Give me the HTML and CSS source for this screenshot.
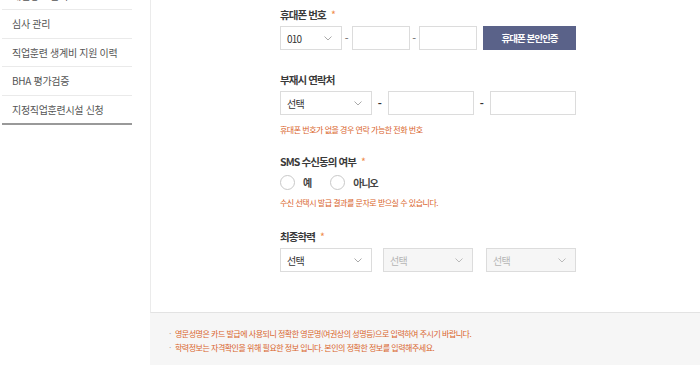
FILE: index.html
```html
<!DOCTYPE html>
<html lang="ko">
<head>
  <meta charset="UTF-8">
  <title>회원정보 수정</title>
  <link rel="stylesheet" href="styles.css">
</head>
<body>
  <aside class="sidebar">
    <ul class="side-menu">
      <li>개인정보 관리</li>
      <li>심사 관리</li>
      <li>직업훈련 생계비 지원 이력</li>
      <li>BHA 평가검증</li>
      <li>지정직업훈련시설 신청</li>
    </ul>
  </aside>

  <main class="content">
    <section class="form-box">
      <div class="form">
        <div class="field field-phone">
          <div class="label">휴대폰 번호 <span class="req">*</span></div>
          <div class="row">
            <div class="select sel-sm"><span>010</span><svg width="8" height="5" viewBox="0 0 8 5"><path d="M0.5 0.5 L4 4 L7.5 0.5" fill="none" stroke="#aaa"/></svg></div>
            <span class="dash">-</span>
            <div class="input inp-sm"></div>
            <span class="dash">-</span>
            <div class="input inp-sm"></div>
            <button class="btn">휴대폰 본인인증</button>
          </div>
        </div>

        <div class="field field-alt">
          <div class="label">부재시 연락처</div>
          <div class="row">
            <div class="select"><span>선택</span><svg width="8" height="5" viewBox="0 0 8 5"><path d="M0.5 0.5 L4 4 L7.5 0.5" fill="none" stroke="#aaa"/></svg></div>
            <span class="dash dash-b">-</span>
            <div class="input inp-md"></div>
            <span class="dash dash-b">-</span>
            <div class="input inp-md"></div>
          </div>
          <p class="help">휴대폰 번호가 없을 경우 연락 가능한 전화 번호</p>
        </div>

        <div class="field field-sms">
          <div class="label">SMS 수신동의 여부 <span class="req">*</span></div>
          <div class="radios">
            <label class="radio"><span class="circle"></span>예</label>
            <label class="radio"><span class="circle"></span>아니오</label>
          </div>
          <p class="help help-sms">수신 선택시 발급 결과를 문자로 받으실 수 있습니다.</p>
        </div>

        <div class="field field-edu">
          <div class="label">최종학력 <span class="req">*</span></div>
          <div class="row row-edu">
            <div class="select"><span>선택</span><svg width="8" height="5" viewBox="0 0 8 5"><path d="M0.5 0.5 L4 4 L7.5 0.5" fill="none" stroke="#aaa"/></svg></div>
            <div class="select disabled"><span>선택</span><svg width="8" height="5" viewBox="0 0 8 5"><path d="M0.5 0.5 L4 4 L7.5 0.5" fill="none" stroke="#bbb"/></svg></div>
            <div class="select disabled"><span>선택</span><svg width="8" height="5" viewBox="0 0 8 5"><path d="M0.5 0.5 L4 4 L7.5 0.5" fill="none" stroke="#bbb"/></svg></div>
          </div>
        </div>
      </div>
    </section>

    <section class="notes">
      <ul>
        <li>영문성명은 카드 발급에 사용되니 정확한 영문명(여권상의 성명등)으로 입력하여 주시기 바랍니다.</li>
        <li>학력정보는 자격확인을 위해 필요한 정보 입니다. 본인의 정확한 정보를 입력해주세요.</li>
      </ul>
    </section>
  </main>
</body>
</html>
```

FILE: styles.css
```css
html, body {
  margin: 0;
  padding: 0;
  height: 365px;
  overflow: hidden;
}
body {
  font-family: "Noto Sans CJK KR", "Noto Sans", sans-serif;
  background: #fff;
  color: #333;
  display: flex;
}

/* left menu */
.sidebar {
  width: 130px;
  margin-left: 2px;
  margin-right: 18px;
}
.side-menu {
  list-style: none;
  margin: -18.5px 0 0;
  padding: 0;
  border-bottom: 2px solid #999;
}
.side-menu li {
  height: 27.5px;
  line-height: 27.5px;
  padding-left: 10px;
  font-size: 10px;
  letter-spacing: -0.3px;
  color: #555;
  border-bottom: 1px solid #eaeaea;
  white-space: nowrap;
}
.side-menu li:last-child {
  border-bottom: none;
}

/* main area */
.content {
  flex: 1;
  display: flex;
  flex-direction: column;
}
.form-box {
  border-left: 1px solid #ebebeb;
  border-bottom: 1px solid #e3e3e3;
  box-sizing: border-box;
  height: 313px;
}
.form {
  padding: 7px 0 0 129px;
}
.label {
  font-size: 10.5px;
  line-height: 16px;
  font-weight: bold;
  letter-spacing: -0.9px;
  color: #3a3a3a;
  margin-bottom: 3px;
}
.req {
  color: #f08a4b;
  font-weight: normal;
  margin-left: 3px;
}
.row {
  display: flex;
  align-items: center;
  height: 24px;
}
.select, .input {
  box-sizing: border-box;
  height: 24px;
  border: 1px solid #dcdcdc;
  background: #fff;
}
.select {
  width: 92px;
  display: flex;
  align-items: center;
  justify-content: space-between;
  padding: 0 9px 0 6px;
  font-size: 10px;
  letter-spacing: -0.8px;
  color: #333;
}
.select svg {
  display: block;
}
.sel-sm {
  width: 62px;
}
.select.disabled {
  background: #f6f6f6;
  color: #b5b5b5;
  width: 90px;
}
.inp-sm {
  width: 58px;
}
.inp-md {
  width: 86.5px;
}
.dash {
  width: 9.5px;
  text-align: center;
  font-size: 11px;
  color: #666;
}
.dash-b {
  width: 15.5px;
  font-weight: bold;
  color: #333;
}
.btn {
  margin-left: 6px;
  width: 93px;
  height: 24px;
  border: none;
  background: #5a6289;
  color: #fff;
  font-family: inherit;
  font-size: 9.5px;
  letter-spacing: -1px;
  font-weight: bold;
  padding: 0;
}
.row-edu {
  gap: 11px;
}
.row-edu .select.disabled:last-child {
  margin-left: 2px;
}
.field-alt {
  margin-top: 22px;
}
.field-sms {
  margin-top: 17px;
}
.field-edu {
  margin-top: 19px;
}
.help {
  margin: 8px 0 0;
  font-size: 8px;
  line-height: 14px;
  letter-spacing: -0.5px;
  color: #d9642b;
}
.help-sms {
  margin-top: 6px;
}
.radios {
  display: flex;
  gap: 19px;
  height: 16px;
  margin-top: 4px;
  align-items: center;
}
.radio {
  display: flex;
  align-items: center;
  font-size: 10px;
  letter-spacing: -1px;
  font-weight: bold;
  color: #444;
}
.circle {
  width: 15px;
  height: 15px;
  box-sizing: border-box;
  border: 1px solid #c8c8c8;
  border-radius: 50%;
  margin-right: 8px;
}

/* notes */
.notes {
  flex: 1;
  background: #f6f6f6;
  padding: 14px 0 0 19px;
}
.notes ul {
  list-style: none;
  margin: 0;
  padding: 0;
}
.notes li {
  font-size: 8px;
  line-height: 14px;
  letter-spacing: -0.5px;
  color: #d9642b;
  padding-left: 6px;
  position: relative;
}
.notes li::before {
  content: "·";
  color: #aaa;
  position: absolute;
  left: 0;
}
```
